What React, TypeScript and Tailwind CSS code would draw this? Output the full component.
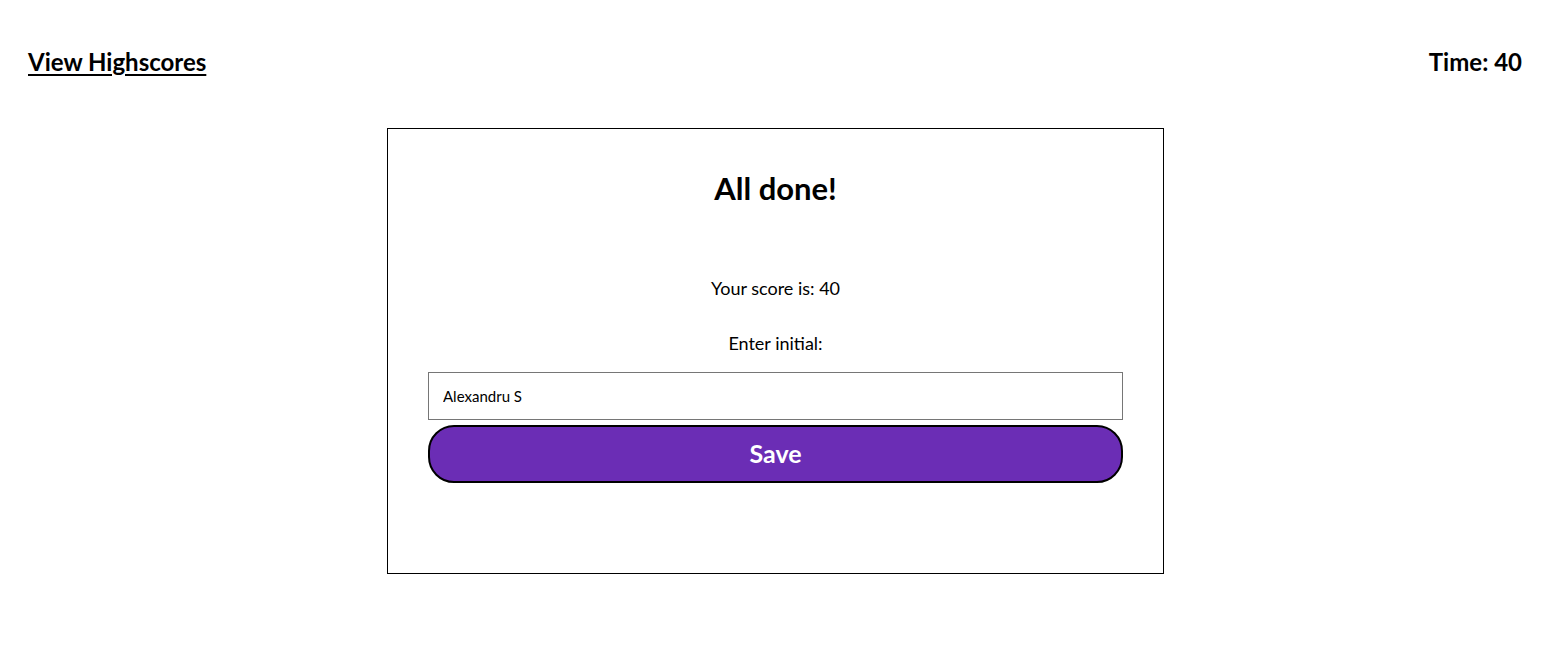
export default function App() {
  return (
    <div className="min-h-[649px] bg-white text-black font-['Lato','Open_Sans',sans-serif]">
      <header className="flex justify-between items-center pl-[28px] pr-[39px] pt-[47px]">
        <a href="#" className="text-[24px] font-bold underline leading-[30px] underline-offset-[3px]">
          View Highscores
        </a>
        <p className="text-[24px] font-bold leading-[30px]">Time: 40</p>
      </header>
      <main className="flex pl-[387px] pt-[51px]">
        <div className="w-[777px] h-[446px] border border-black flex flex-col items-center px-[40px]">
          <h1 className="text-[31px] font-bold mt-[39px] leading-[40px]">All done!</h1>
          <p className="text-[18px] mt-[67px] leading-[26px]">Your score is: 40</p>
          <p className="text-[18px] mt-[29px] leading-[26px]">Enter initial:</p>
          <input
            defaultValue="Alexandru S"
            className="w-full h-[48px] mt-[16px] border border-[#767676] px-[14px] text-[15px] outline-none"
          />
          <button className="w-full h-[58px] mt-[5px] rounded-[26px] border-2 border-black bg-[#6b2db5] text-white text-[25px] font-bold">
            Save
          </button>
        </div>
      </main>
    </div>
  );
}
